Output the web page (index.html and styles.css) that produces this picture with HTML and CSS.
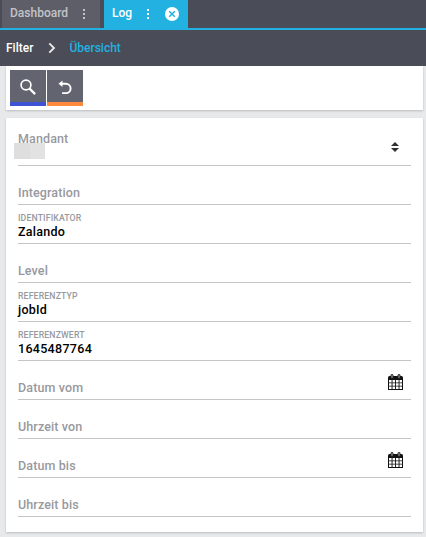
FILE: index.html
```html
<!DOCTYPE html>
<html lang="de">
<head>
<meta charset="utf-8">
<title>Log</title>
<link rel="stylesheet" href="styles.css">
</head>
<body>
<nav class="tabs">
  <div class="tab"><span class="tab-name dashboard">Dashboard</span><span class="dots"><i></i><i></i><i></i></span></div>
  <div class="tab active"><span class="tab-name log">Log</span><span class="dots"><i></i><i></i><i></i></span>
    <svg class="close" width="14" height="14" viewBox="0 0 14 14"><circle cx="7" cy="7" r="7" fill="#fff"/><path d="M4.200 4.200l5.600 5.600M9.800 4.200L4.200 9.800" stroke="#23b1e1" stroke-width="1.500"/></svg>
  </div>
</nav>
<header class="crumbs">
  <span class="crumb">Filter</span>
  <svg class="chevron" width="8" height="12" viewBox="0 0 8 12"><path d="M1.300 1.300L6 6l-4.700 4.700" fill="none" stroke="#e8e8ea" stroke-width="1.900"/></svg>
  <span class="crumb current">Übersicht</span>
</header>
<section class="toolbar">
  <button class="tool search"><svg width="36" height="32" viewBox="0 0 36 32"><circle cx="16" cy="15" r="4.900" fill="none" stroke="#fff" stroke-width="1.700"/><path d="M19.600 18.600l5.500 5.500" stroke="#fff" stroke-width="2.200"/></svg></button>
  <button class="tool reset"><svg width="36" height="32" viewBox="0 0 36 32"><path d="M13.500 13.700h5.400a4.700 4.700 0 0 1 0 9.400h-3.800" fill="none" stroke="#fff" stroke-width="1.900"/><path d="M11.500 13.700l4-3.200v6.400z" fill="#fff"/></svg></button>
</section>
<main class="form">
  <div class="field select"><label>Mandant</label><span class="mask"></span>
    <svg class="sort" width="8" height="10" viewBox="0 0 8 10"><path d="M0 4l4-4 4 4zM0 6h8l-4 4z" fill="#303030"/></svg></div>
  <div class="field"><label>Integration</label></div>
  <div class="field filled"><label>IDENTIFIKATOR</label><span class="value">Zalando</span></div>
  <div class="field"><label>Level</label></div>
  <div class="field filled"><label>REFERENZTYP</label><span class="value">jobId</span></div>
  <div class="field filled"><label>REFERENZWERT</label><span class="value number">1645487764</span></div>
  <div class="field"><label>Datum vom</label>
    <svg class="calendar" width="15" height="16" viewBox="0 0 15 16"><path d="M0 3.500Q0 2 1.500 2h12Q15 2 15 3.500V16H0z" fill="#111"/><path d="M1 6h2.600v2.500H1zm3.500 0h2.600v2.500H4.500zM8 6h2.600v2.500H8zm3.500 0H14v2.500h-2.500zM1 9.300h2.600v2.500H1zm3.500 0h2.600v2.500H4.500zm3.500 0h2.600v2.500H8zm3.500 0H14v2.500h-2.500zM1 12.600h2.600V15H1zm3.500 0h2.600V15H4.500zm3.500 0h2.600V15H8zm3.500 0H14V15h-2.500z" fill="#fff"/><path d="M4 1.500v2M11 1.500v2" stroke="#222" stroke-width="3" stroke-linecap="round"/><path d="M4 1.500v2M11 1.500v2" stroke="#aaa" stroke-width="1" stroke-linecap="round"/></svg></div>
  <div class="field"><label>Uhrzeit von</label></div>
  <div class="field"><label>Datum bis</label>
    <svg class="calendar" width="15" height="16" viewBox="0 0 15 16"><path d="M0 3.500Q0 2 1.500 2h12Q15 2 15 3.500V16H0z" fill="#111"/><path d="M1 6h2.600v2.500H1zm3.500 0h2.600v2.500H4.500zM8 6h2.600v2.500H8zm3.500 0H14v2.500h-2.500zM1 9.300h2.600v2.500H1zm3.500 0h2.600v2.500H4.500zm3.500 0h2.600v2.500H8zm3.500 0H14v2.500h-2.500zM1 12.600h2.600V15H1zm3.500 0h2.600V15H4.500zm3.500 0h2.600V15H8zm3.500 0H14V15h-2.500z" fill="#fff"/><path d="M4 1.500v2M11 1.500v2" stroke="#222" stroke-width="3" stroke-linecap="round"/><path d="M4 1.500v2M11 1.500v2" stroke="#aaa" stroke-width="1" stroke-linecap="round"/></svg></div>
  <div class="field"><label>Uhrzeit bis</label></div>
</main>
</body>
</html>
```
FILE: styles.css
```css
* { box-sizing: border-box; }
body { margin: 0; height: 537px; overflow: hidden; background: #e8e9eb; font: 500 13px/16px Roboto, sans-serif; }
.tabs { display: flex; gap: 4px; height: 30px; padding-left: 2px; background: #4a4c57; border-bottom: 2px solid #23b1e1; }
.tab { display: flex; align-items: center; width: 98px; height: 28px; padding: 0 15px 2px 8px; justify-content: space-between; background: #5d5e68; color: #c3c4c8; font-size: 12px; }
.tab.active { width: 84px; padding-right: 9px; background: #23b1e1; color: #fff; }
.active .dots { margin-left: -2px; }
.close { margin-top: 2px; }
.dots { display: flex; flex-direction: column; gap: 2px; padding-top: 2px; }
.dots i { width: 2px; height: 2px; background: currentColor; }
.crumbs { display: flex; align-items: center; height: 36px; padding: 0 6px; background: #4a4c57; color: #fff; font-size: 12px; }
.chevron { margin: 0 13px 0 15px; }
.current { color: #23b1e1; }
.toolbar { display: flex; gap: 1px; width: 417px; height: 44px; margin-left: 6px; padding: 4px; background: #fff; box-shadow: 0 1px 2px #0003; }
.tool { width: 36px; height: 36px; padding: 0; border: 0; border-bottom: 4px solid #3d52d5; background: #62646f; }
.tool svg { display: block; }
.reset { border-color: #ff8a3d; }
.form { width: 417px; height: 414px; margin: 8px 0 0 6px; padding: 9px 12px 0; background: #fff; box-shadow: 0 1px 2px #0003; }
.field { position: relative; display: flex; flex-direction: column; justify-content: flex-end; height: 39px; padding-bottom: 3px; border-bottom: 1px solid #c3c4c7; color: #97999e; font-size: 12.500px; font-weight: 500; letter-spacing: .12px; }
.select { justify-content: flex-start; padding-top: 4px; }
.select label { font-size: 12.500px; }
.mask { position: absolute; left: -4px; top: 16px; width: 31px; height: 16px; background: linear-gradient(90deg, #dedede 16px, #e2e2e2 16px); }
.filled { padding-bottom: 4px; }
.filled label { font-size: 8.700px; line-height: 11px; letter-spacing: .15px; }
.value { color: #000; font-size: 12.500px; line-height: 15px; letter-spacing: .25px; }
.number { letter-spacing: .3px; }
.sort { position: absolute; right: 12px; top: 15px; }
.calendar { position: absolute; right: 8px; top: 13px; }
```
